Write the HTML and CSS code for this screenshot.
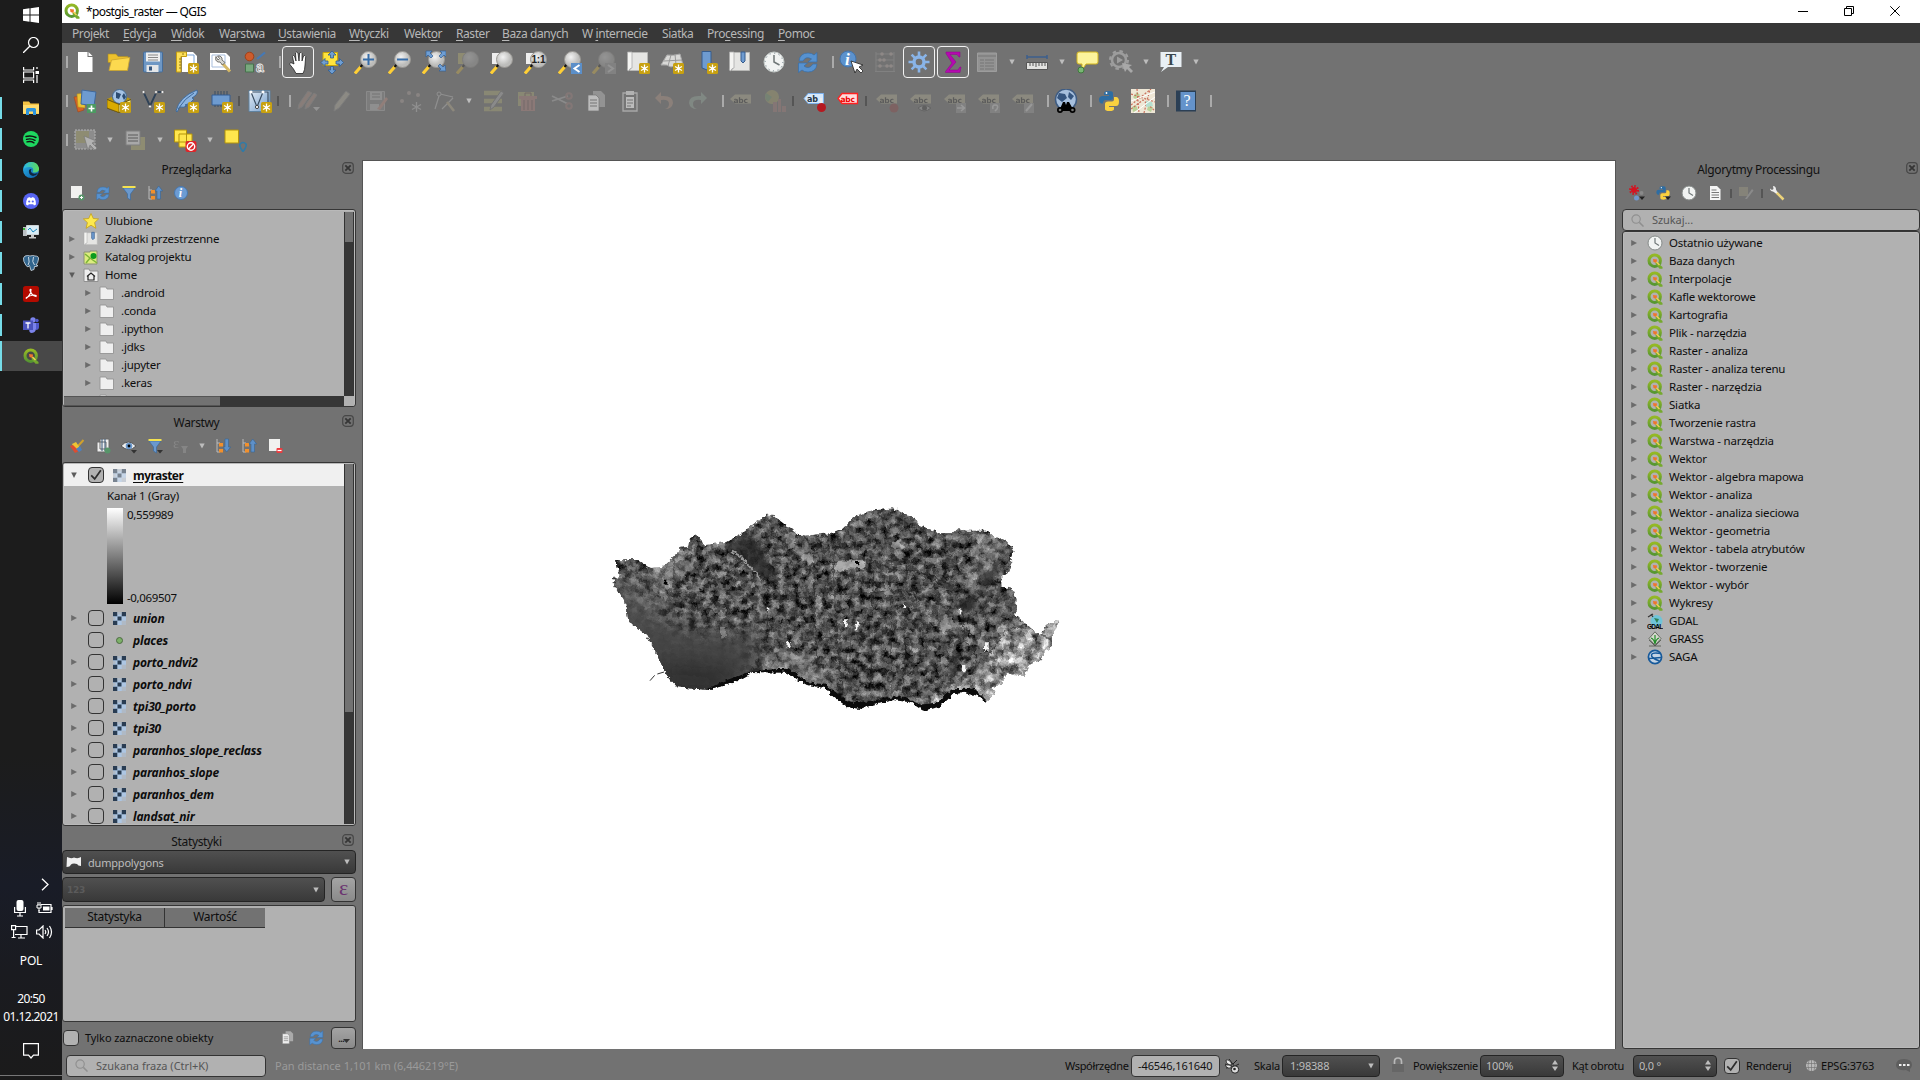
FILE: index.html
```html
<!DOCTYPE html>
<html lang="pl">
<head>
<meta charset="utf-8">
<title>*postgis_raster — QGIS</title>
<link rel="stylesheet" href="styles.css">
</head>
<body>
<svg class="defs" width="0" height="0" aria-hidden="true">
<defs>
<linearGradient id="gQ" x1="0" y1="0" x2="0" y2="1"><stop offset="0" stop-color="#95b925"/><stop offset="1" stop-color="#569632"/></linearGradient>
<linearGradient id="gE" x1="0" y1="0" x2="1" y2="1"><stop offset="0" stop-color="#2bb6e8"/><stop offset="1" stop-color="#0b5aa8"/></linearGradient>
<linearGradient id="gG" x1="0" y1="0" x2="1" y2="0"><stop offset="0" stop-color="#2bb9e6"/><stop offset="1" stop-color="#5fdc58"/></linearGradient>
<radialGradient id="gL" cx=".4" cy=".35"><stop offset="0" stop-color="#f2f2f2"/><stop offset="1" stop-color="#bcbcba"/></radialGradient>
<linearGradient id="gV" x1="0" y1="0" x2="1" y2="1"><stop offset="0" stop-color="#e6eef6"/><stop offset="1" stop-color="#6f9bcb"/></linearGradient>
</defs>
</svg>
<svg class="symbols" aria-hidden="true">
<symbol id="new" viewBox="0 0 24 24"><rect x="13" y="13" width="11" height="11" rx="1.500" fill="#c8a110"/><path d="M18.500 14.500v8M15 16.500l7 4M22 16.500l-7 4" stroke="#fff" stroke-width="1.300"/><circle cx="18.500" cy="18.500" r="1.500" fill="#fff"/></symbol>
<symbol id="file" viewBox="0 0 24 24"><path d="M5 2h9.500v5H19.500v15H5z" fill="#fff"/><path d="M15.500 2l4 4h-4z" fill="#fff"/></symbol>
<symbol id="folder" viewBox="0 0 24 24"><path d="M1 4h8l2 2.500h10v6H1z" fill="#edc12c" stroke="#a98c24" stroke-width=".6"/><path d="M4.500 10L22.800 7.500 20.500 20.500H2z" fill="#fcd94f" stroke="#cba52d" stroke-width=".8"/></symbol>
<symbol id="save" viewBox="0 0 24 24"><rect x="2.500" y="2" width="19" height="20" rx="1" fill="#6e97c4" stroke="#456c99"/><path d="M5 2.500h14v9H5z" fill="#eee"/><path d="M7 5h10M7 7.500h10M7 10h10" stroke="#888"/><path d="M5.500 15h12v7h-12z" fill="#e4e6e8"/><path d="M8 16.500h3v4H8z" fill="#35567f"/></symbol>
<symbol id="layout" viewBox="0 0 24 24"><path d="M7 2h11l4 4v16H7z" fill="#fff"/><path d="M10 5h9v12" stroke="#7aa3d6" fill="none"/><path d="M1.500 2h10v4.500H6V22H1.500z" fill="#fde058" stroke="#c49d10"/><path d="M4 9h2M4 12h2M4 15h2M4 18h2M8 3v2" stroke="#8f741b"/><use href="#new"/></symbol>
<symbol id="manager" viewBox="0 0 24 24"><path d="M1 3h16l4 4v13H1z" fill="#fff"/><path d="M3 5h13v12H3z" fill="none" stroke="#a7bddc"/><path d="M13 13l8 8.500" stroke="#d5b865" stroke-width="3"/><path d="M7 6.500q-1.500 4 2 5.500l2 0 2.500 3 2.500-2.500-3-2.500 0-2q-1.500-3-4.500-2l2 2.500-1.500 1.500z" fill="#d6d6d0" stroke="#555" stroke-width=".8"/></symbol>
<symbol id="style" viewBox="0 0 24 24"><circle cx="6.500" cy="6.500" r="4.300" fill="#cd5c2c" stroke="#a03f17"/><path d="M14 9L22 2.500" stroke="#4679b5" stroke-width="2.200"/><path d="M2.500 14h8v8h-8z" fill="#79a97e" stroke="#46724c"/><text x="13" y="22" font-family="Liberation Sans" font-size="14" font-weight="bold" fill="#727272" stroke="#eee" stroke-width=".8">a</text></symbol>
<symbol id="hand" viewBox="0 0 24 24"><path d="M8 14L6.500 6.500Q7 4.500 8.500 6L10 11 9.500 3Q10.500 1 12 3l1 8 .6-8q1.400-1.500 2.400.5L16 11l1.500-5q1.500-1.500 2.200.5L19 15q0 5-2 8.500H10Q8 19 3.500 14q.5-2 2.500-1z" fill="#fff" stroke="#111" stroke-width=".7"/></symbol>
<symbol id="panmap" viewBox="0 0 24 24"><path d="M3 2.500h14.500v13H3z" fill="#ffe43d" stroke="#c8a408"/><g fill="#6f9ed2" stroke="#305c91" stroke-width=".8"><path d="M12 1l4 4h-2.500v3h-3V5H8zM12 24l4-4h-2.500v-3.500h-3V20H8zM1 12.500l4-4v2.500h3v3H5v2.500zM23.500 12.500l-4-4v2.500H16v3h3.500v2.500z"/></g></symbol>
<symbol id="mag" viewBox="0 0 24 24"><path d="M1 23.500l6-7" stroke="#ffcf35" stroke-width="3"/><path d="M6.500 17l4-4.500" stroke="#111" stroke-width="2"/><circle cx="14.500" cy="9.500" r="8" fill="url(#gL)" stroke="#999793"/></symbol>
<symbol id="zin" viewBox="0 0 24 24"><use href="#mag"/><path d="M14.500 4v11M9 9.500h11" stroke="#376da8" stroke-width="2"/></symbol>
<symbol id="zout" viewBox="0 0 24 24"><use href="#mag"/><path d="M9 9.500h11" stroke="#376da8" stroke-width="2"/></symbol>
<symbol id="zfull" viewBox="0 0 24 24"><use href="#mag"/><path d="M4 1h6L8 3l3 3-2 2-3-3-2 2zM24 1v6l-2-2-3 3-2-2 3-3-2-2zM24 21h-7l2-2-3-3 2-2 3 3 2-2z" fill="#6e9ed4" stroke="#345f94" stroke-width=".7"/></symbol>
<symbol id="zsel" viewBox="0 0 24 24"><path d="M2 3h10v11H2z" fill="#d9d075"/><use href="#mag"/></symbol>
<symbol id="zlay" viewBox="0 0 24 24"><path d="M2 3h10v11H2z" fill="#eee"/><use href="#mag"/></symbol>
<symbol id="z11" viewBox="0 0 24 24"><use href="#zlay"/><text x="7.500" y="13" font-family="Liberation Sans" font-size="10" font-weight="bold" fill="#222">1:1</text></symbol>
<symbol id="zlast" viewBox="0 0 24 24"><use href="#mag"/><path d="M13 13h11v11H13z" fill="#5b8fc9"/><path d="M21.500 15l-5 3.500 5 3.500" fill="none" stroke="#fff" stroke-width="2"/></symbol>
<symbol id="znext" viewBox="0 0 24 24"><use href="#mag"/><path d="M13 13h11v11H13z" fill="#a9a9a9"/><path d="M16 15l5 3.500-5 3.500" fill="none" stroke="#eee" stroke-width="2"/></symbol>
<symbol id="scroll" viewBox="0 0 24 24"><path d="M3 2.500h18.500v18H4z" fill="#e5e5e3" stroke="#b7b7b5"/><path d="M1.500 2h4.500v16q-2.500 0-3 3-2.500-.5-1.500-3z" fill="#f4f4f2" stroke="#aaa" stroke-width=".8"/></symbol>
<symbol id="newmap" viewBox="0 0 24 24"><use href="#scroll"/><use href="#new"/></symbol>
<symbol id="map3d" viewBox="0 0 24 24"><path d="M7 5q6 1 13-1l3 11q-8 0-12 2-4-3-10-2z" fill="#d9d9d7" stroke="#aaa"/><path d="M4 11l18-1M11 5L8 16M15 4l1 11" stroke="#999" fill="none"/><use href="#new"/></symbol>
<symbol id="newbm" viewBox="0 0 24 24"><path d="M8 1.500h9v20L8 18z" fill="#6e9bd0" stroke="#365c8d"/><use href="#new"/></symbol>
<symbol id="bm" viewBox="0 0 24 24"><use href="#scroll"/><path d="M13 2h4v9l-2 2-2-2z" fill="#6e9bd0" stroke="#365c8d"/></symbol>
<symbol id="clock" viewBox="0 0 24 24"><circle cx="12" cy="12" r="10" fill="#f1f3f2" stroke="#c4cac8" stroke-width="1"/><circle cx="12" cy="12" r="8.800" fill="none" stroke="#6c7b85" stroke-dasharray="1 3.600"/><path d="M12 5v7l5.500 3" fill="none" stroke="#6f7777" stroke-width="1.500"/></symbol>
<symbol id="clocks" viewBox="0 0 16 16"><circle cx="8" cy="8" r="7" fill="#f1f3f2" stroke="#858a88"/><path d="M8 3v5l4 2.500" fill="none" stroke="#6f7777" stroke-width="1.200"/></symbol>
<symbol id="refresh" viewBox="0 0 24 24"><path d="M3 11Q4 3 12 3q4 0 6 2l3-2.500V12h-9l3.500-3Q10 5.500 7 11zM21 14q-1 8-9 8-4 0-6-2l-3.500 2.500V13h9l-3.500 3q5 4 9-2z" fill="#5792d0" stroke="#376fa9" stroke-width=".7"/></symbol>
<symbol id="info" viewBox="0 0 24 24"><circle cx="9" cy="9" r="8" fill="#5c92cd" stroke="#4373aa"/><text x="6" y="15" font-family="Liberation Serif" font-style="italic" font-weight="bold" font-size="17" fill="#fff">i</text><path d="M12 11l4 12 2-4 4 4 2-2-4-4 4-2z" fill="#fff" stroke="#222" stroke-width=".8"/></symbol>
<symbol id="abacus" viewBox="0 0 24 24"><path d="M3 2v20M21 2v20M3 4h18M3 10h18M3 16h18M2 21.500h20" stroke="#aaa" fill="none"/><g fill="#d9c4be"><circle cx="9" cy="4" r="1.800"/><circle cx="18" cy="4" r="1.800"/><circle cx="7" cy="10" r="1.800"/><circle cx="11" cy="10" r="1.800"/><circle cx="7" cy="16" r="1.800"/><circle cx="14" cy="16" r="1.800"/><circle cx="18" cy="16" r="1.800"/></g></symbol>
<symbol id="gear" viewBox="0 0 24 24"><path d="M12 1.500v21M1.500 12h21M4.600 4.600l14.800 14.800M19.400 4.600L4.600 19.400" stroke="#89b4e8" stroke-width="2.600"/><circle cx="12" cy="12" r="5" fill="#727272" stroke="#89b4e8" stroke-width="3.400"/></symbol>
<symbol id="sigma" viewBox="0 0 24 24"><path d="M5 2h14v5h-1l-2-2.500H9l6 7.500-7 8h9l2-3h1l-1 5.500H4.500v-1L11 13 5 3.500z" fill="#b509b0" stroke="#8d0788" stroke-width=".5"/></symbol>
<symbol id="table" viewBox="0 0 24 24"><path d="M2.500 3h19v18.500h-19z" fill="#aaa" stroke="#bbb"/><path d="M3 6h18M5 10h4M10 10h9M5 13h4M10 13h9M5 16h4M10 16h9M5 19h4M10 19h9" stroke="#777"/></symbol>
<symbol id="ruler" viewBox="0 0 24 24"><path d="M1.500 7h21M2 5v4M22 5v4" stroke="#3c5f8d" stroke-width="1.500"/><path d="M1.500 12.500h21v7h-21z" fill="#e2e2e0" stroke="#555"/><path d="M5 13v3M8 13v3M11 13v4M14 13v3M17 13v3M20 13v3" stroke="#555"/></symbol>
<symbol id="tip" viewBox="0 0 24 24"><path d="M4 2h17q2 0 2 2v8q0 2-2 2H11l-4 6v-6H4q-2 0-2-2V4q0-2 2-2z" fill="#fcf39c" stroke="#d3b51c"/><circle cx="6" cy="20" r="3" fill="#79b774" stroke="#3f7a3c"/></symbol>
<symbol id="action" viewBox="0 0 24 24"><circle cx="10" cy="10" r="7" fill="none" stroke="#bbb" stroke-width="2.500"/><circle cx="10" cy="10" r="9" fill="none" stroke="#bbb" stroke-width="2" stroke-dasharray="3.500 3.600"/><path d="M8 6.500l6 3.500-6 3.500z" fill="#bbb"/><path d="M13 13l3 9 2-3 4 4 2-2-4-4 3-2z" fill="#ccc"/></symbol>
<symbol id="text" viewBox="0 0 24 24"><path d="M1.500 2h21v15H9L2 22l3-5H1.500z" fill="#e9f0f5"/><text x="6.500" y="14.500" font-family="Liberation Serif" font-weight="bold" font-size="16" fill="#39464d">T</text></symbol>
<symbol id="addlayer" viewBox="0 0 24 24"><path d="M1 8l8-1 2 14-6 2z" fill="#d36427" stroke="#a3461a" stroke-width=".6"/><path d="M4 5l8-1v15l-7-1z" fill="#eac335" stroke="#b78e1c" stroke-width=".6"/><path d="M9 1l14 2-2 14-13-2z" fill="#6e9bd0" stroke="#41699b"/><path d="M14 15h9v9h-9z" fill="#4c9a62"/><path d="M18.500 16.500v6M15.500 19.500h6" stroke="#fff" stroke-width="1.600"/></symbol>
<symbol id="geopkg" viewBox="0 0 24 24"><path d="M0 10l12-5 12 5-12 5z" fill="#b8960f"/><circle cx="12.500" cy="7.500" r="7" fill="#a5c3e3" stroke="#41678f"/><path d="M9 3l5 2-2 5-3-1zM17 4l2 4-2 3-2-4z" fill="#2c4c70"/><path d="M0 10.500l12 5 12-5v8l-12 5L0 19z" fill="#fdf08a" stroke="#665110"/><path d="M0 10.500l12 5v8L0 19z" fill="#d9ab00" stroke="#665110" stroke-width=".7"/><use href="#new"/></symbol>
<symbol id="shp" viewBox="0 0 24 24"><path d="M2.500 3L9 17 15.500 3h6" fill="none" stroke="#2f4257" stroke-width="1.800"/><g fill="#eee" stroke="#555" stroke-width=".6"><circle cx="2.500" cy="3" r="1.500"/><circle cx="9" cy="17.500" r="1.500"/><circle cx="15" cy="3" r="1.500"/><circle cx="21.500" cy="3" r="1.500"/></g><use href="#new"/></symbol>
<symbol id="feather" viewBox="0 0 24 24"><path d="M1 22Q4 8 22 1q2 4-5 8l2 1q-3 5-9 6l2 1q-4 2-7 1l-3 5z" fill="#8cb4e0" stroke="#3f6a9a"/><path d="M3 20Q10 9 19 4" stroke="#3f6a9a" fill="none"/><use href="#new"/></symbol>
<symbol id="mem" viewBox="0 0 24 24"><path d="M6 2v16M9 2v16M12 2v16M15 2v16M18 2v16" stroke="#384d63" stroke-width="1"/><path d="M3 6h18v10H3z" fill="#6e9bd0" stroke="#345d90"/><use href="#new"/></symbol>
<symbol id="virt" viewBox="0 0 24 24"><path d="M1 1.500h21v21H1z" fill="url(#gV)" stroke="#60829f"/><path d="M3 3l6 15 6-15M3 3h17v11" fill="none" stroke="#3a4e62" stroke-width="1.200"/><circle cx="3" cy="3" r="1.500" fill="#fff"/><circle cx="9" cy="18" r="1.600" fill="#fff" stroke="#444"/><circle cx="15" cy="3" r="1.500" fill="#fff"/><use href="#new"/></symbol>
<symbol id="pen" viewBox="0 0 24 24"><path d="M4 22l1-6L16 2l4 3L9 19z" fill="#d2cdb5" stroke="#999"/></symbol>
<symbol id="pens" viewBox="0 0 24 24"><path d="M2 20l1-5L12 2l4 2L6 18z" fill="#c59c8c" stroke="#999"/><path d="M9 20l1-5 8-11 3 2-8 12z" fill="#c59c8c" stroke="#999"/><path d="M17 18h7l-3.500 4z" fill="#eee"/></symbol>
<symbol id="savee" viewBox="0 0 24 24"><path d="M2.500 2.500h18v19h-18z" fill="#999" stroke="#ccc"/><path d="M6 3h12v8H6zM6 15h9v6H6z" fill="#ddd"/><path d="M8 5h8M8 8h8" stroke="#777"/><path d="M13 20L22 8l2 2-8 11z" fill="#e4a08f"/></symbol>
<symbol id="pts" viewBox="0 0 24 24"><g fill="#c8b4b0"><circle cx="4" cy="12" r="2"/><circle cx="11" cy="4" r="2"/><circle cx="20" cy="6" r="2"/></g><path d="M18.500 13v10M14 15.500l9 5M23 15.500l-9 5" stroke="#ddd" stroke-width="1.300"/></symbol>
<symbol id="vert" viewBox="0 0 24 24"><path d="M3 20L7 7M8 5l13 3M10 20L21 9" stroke="#ddd" fill="none" stroke-width="1.200"/><circle cx="7" cy="5" r="2" fill="#727272" stroke="#ddd"/><path d="M15 13l7 9" stroke="#d6c69a" stroke-width="2.500"/></symbol>
<symbol id="multi" viewBox="0 0 24 24"><path d="M2 4h18M2 12h18M2 20h18" stroke="#c8c37b" stroke-width="4.500"/><path d="M8 21l1-5L19 2l3 2L12 18z" fill="#ccc" stroke="#777"/></symbol>
<symbol id="trash" viewBox="0 0 24 24"><path d="M2 3h16v14H2z" fill="#c8c37b"/><path d="M3 7h18v3H3zM5 10h14v12H5z" fill="#cf8d87"/><path d="M8 11v10M12 11v10M16 11v10M9 7V4h6v3" fill="none" stroke="#7a5350"/></symbol>
<symbol id="cut" viewBox="0 0 24 24"><path d="M2 7l16 8M2 12l16-5" stroke="#ccc" stroke-width="1.700"/><g fill="none" stroke="#b28783" stroke-width="2"><circle cx="19" cy="7" r="2.800"/><circle cx="19" cy="17" r="2.800"/></g></symbol>
<symbol id="copy" viewBox="0 0 24 24"><path d="M9 2h8l4 4v12H9z" fill="#aaa"/><path d="M4 6h8l3 3v13H4z" fill="#eee" stroke="#777" stroke-width=".7"/><path d="M6 11h7M6 14h7M6 17h7" stroke="#777"/></symbol>
<symbol id="paste" viewBox="0 0 24 24"><path d="M5 4h14v18H5z" fill="#777" stroke="#ccc" stroke-width="1.300"/><path d="M8 8h8v11H8z" fill="#eee"/><path d="M8 2h8v4H8z" fill="#ddd"/><path d="M9 11h6M9 14h6M9 17h4" stroke="#777"/></symbol>
<symbol id="undo" viewBox="0 0 24 24"><path d="M9 3L3 9l6 6v-4q8-1 8 4 0 4-4 5 7 0 8-6 0-8-12-7z" fill="#d0a791"/></symbol>
<symbol id="redo" viewBox="0 0 24 24"><path d="M15 3l6 6-6 6v-4q-8-1-8 4 0 4 4 5-7 0-8-6 0-8 12-7z" fill="#a8c3b1"/></symbol>
<symbol id="abc" viewBox="0 0 24 24"><path d="M1 10l5-4.500h16v9H6z" fill="#cfc9a3"/><text x="4.500" y="13.500" font-family="DejaVu Sans" font-size="7.500" font-weight="bold" fill="#222">abc</text></symbol>
<symbol id="diag" viewBox="0 0 24 24"><circle cx="9" cy="8" r="7" fill="#b9b26a"/><path d="M9 8L3 4a7 7 0 0 0 2 9zM9 8l7 2" fill="#7fae79"/><path d="M10 13h4v10h-4zM15 10h3v13h-3zM19 17h4v6h-4z" fill="#b5837d"/></symbol>
<symbol id="abpin" viewBox="0 0 24 24"><path d="M2 9.500L6 4.500h15.500v10H6z" fill="#d7e9fb" stroke="#7db1ec"/><text x="5" y="13" font-family="DejaVu Sans" font-size="8" font-weight="bold" fill="#263645">ab</text><path d="M19 9v8" stroke="#eee" stroke-width="2"/><circle cx="19.500" cy="18.500" r="4.500" fill="#b51920"/></symbol>
<symbol id="abcr" viewBox="0 0 24 24"><path d="M2 9.500L6 4.500h15.500v10H6z" fill="#fdd" stroke="#f22" stroke-width="1.300"/><text x="4.500" y="13" font-family="DejaVu Sans" font-size="7.500" font-weight="bold" fill="#e00">abc</text></symbol>
<symbol id="l1" viewBox="0 0 24 24"><use href="#abc"/><circle cx="19" cy="19" r="4.500" fill="#9b3a3a"/></symbol>
<symbol id="l2" viewBox="0 0 24 24"><use href="#abc"/><path d="M9 19q6-5 13 0-7 6-13 0z" fill="#bbb" stroke="#444"/><circle cx="15.500" cy="19" r="2.500" fill="#333"/></symbol>
<symbol id="l3" viewBox="0 0 24 24"><use href="#abc"/><path d="M13 14h10v10H13z" fill="#aaa"/><path d="M14 19h7M18 16l3.500 3-3.500 3" stroke="#fff" stroke-width="1.600" fill="none"/></symbol>
<symbol id="l4" viewBox="0 0 24 24"><use href="#abc"/><path d="M13 14h10v10H13z" fill="#aaa"/><path d="M16 20q-1-4 2-4 4 0 2 4l-2 2" stroke="#fff" stroke-width="1.600" fill="none"/></symbol>
<symbol id="l5" viewBox="0 0 24 24"><use href="#abc"/><path d="M13 14h10v10H13z" fill="#aaa"/><path d="M15 22l6-7" stroke="#fff" stroke-width="2"/></symbol>
<symbol id="osm" viewBox="0 0 24 24"><circle cx="12" cy="10.500" r="10.500" fill="#a6bfdd" stroke="#3f5c82" stroke-width="1.500"/><path d="M5 4l6 1 2 4-5 4-5-4zM15 3l5 4-3 4-3-3z" fill="#35557f"/><path d="M5 22L9 13h2l1 3 1-3h2l5 9z" fill="#000"/><circle cx="6" cy="21" r="3"/><circle cx="18.500" cy="21" r="3"/><circle cx="6" cy="21" r="1.300" fill="#777"/><circle cx="18.500" cy="21" r="1.300" fill="#777"/></symbol>
<symbol id="py" viewBox="0 0 24 24"><path d="M7 6V4q0-2 5-2 4 0 4 2v5q0 2-2.500 2H9q-3 0-3 3.500H4q-2-1-2-4T5 7h7V6z" fill="#2d6da3"/><path d="M17 8h2q3 0 3 4.500T19 17h-7v1h5v2q0 2-4.500 2T8 20v-5q0-2.500 3-2.500h4q2 0 2-2z" fill="#fbd13f"/><circle cx="9.500" cy="4" r=".9" fill="#fff"/></symbol>
<symbol id="osmmap" viewBox="0 0 24 24"><path d="M0 0h24v24H0z" fill="#eee7d6"/><path d="M2 8l4-5 3 3-4 5zM1 18l4-2 2 5-5 2zM17 17l5 1-2 5-4-2z" fill="#bad29a"/><path d="M0 5l24 8M6 0l2 24M0 16L20 0M13 24l6-24M0 20l12-9 12 11" fill="none" stroke="#c96f5a" stroke-width="1.200" stroke-dasharray="2 1.500"/><path d="M15 12l6 1 1 4-7 1z" fill="#b5dfd0"/><path d="M0 12l24-9M3 24L24 8" stroke="#fff" stroke-width="1"/></symbol>
<symbol id="help" viewBox="0 0 24 24"><path d="M2 1.500h20v21H2z" fill="#2b3f55"/><path d="M6.500 3H21v18H6.500z" fill="#6493cb"/><text x="9.500" y="17" font-family="Liberation Serif" font-size="16" fill="#fff">?</text></symbol>
<symbol id="selr" viewBox="0 0 24 24"><path d="M2 2h20v19H2z" fill="#bbb" fill-opacity=".6" stroke="#ddd" stroke-dasharray="2 1"/><path d="M3 3h13v12H3z" fill="#a19e72"/><path d="M11 8l4 14 2-5 5 5 2-2-5-5 4-2z" fill="#ddd" stroke="#777" stroke-width=".6"/></symbol>
<symbol id="selv" viewBox="0 0 24 24"><path d="M8 9h14v13H8z" fill="#a19e72"/><path d="M3 3h14v14H3z" fill="#ccc" stroke="#888"/><path d="M5 7h10M5 10h10M5 13h10" stroke="#777" stroke-width="1.500"/></symbol>
<symbol id="desel" viewBox="0 0 24 24"><path d="M1.500 2h12v12h-12zM6 6h13v13H6z" fill="#ffe64d" stroke="#b3930b"/><rect x="12.500" y="13" width="11" height="11" rx="2" fill="#df2529"/><circle cx="18" cy="18.500" r="3.700" fill="none" stroke="#fff" stroke-width="1.400"/><path d="M15.500 21l5-5" stroke="#fff" stroke-width="1.400"/></symbol>
<symbol id="selloc" viewBox="0 0 24 24"><path d="M2 2h13.500v13H2z" fill="#ffe64d" stroke="#b3930b"/><path d="M20 23.500q-4-5-3-7.500 3-3 6 0 1 2.500-3 7.500z" fill="none" stroke="#2f7ba8" stroke-width="1.600"/></symbol>
<symbol id="q" viewBox="0 0 16 16"><circle cx="7.700" cy="7.700" r="5.700" fill="none" stroke="url(#gQ)" stroke-width="3"/><path d="M9 8.500l6.500 5.500v1.700h-3L8.500 11z" fill="#75a92d"/><path d="M6 6l4 .5-.5 3.500-3-1z" fill="#f0762c"/><path d="M9.500 9l3 3" stroke="#f3cf56" stroke-width="1.500"/></symbol>
<symbol id="close" viewBox="0 0 12 12"><rect x=".7" y=".7" width="10.600" height="10.600" rx="3" fill="none" stroke="#474747" stroke-width="1.200"/><path d="M3.300 3.300l5.400 5.400M8.700 3.300L3.300 8.700" stroke="#353535" stroke-width="1.800"/></symbol>
<symbol id="tri" viewBox="0 0 6 8"><path d="M.2 1L6 4 .2 7z" fill="#6b6b6b"/></symbol>
<symbol id="trid" viewBox="0 0 6 8"><path d="M.2 1.500h5.600L3 7z" fill="#5b5b5b"/></symbol>
<symbol id="dd" viewBox="0 0 6 6"><path d="M.3.500h5.400L3 5.500z" fill="#bdbdbd"/></symbol>
<symbol id="addl" viewBox="0 0 16 16"><path d="M2 1h11v12H2z" fill="#f1f1ef"/><circle cx="12.500" cy="12.500" r="3" fill="#57956a"/><path d="M12.500 11v3M11 12.500h3" stroke="#fff"/></symbol>
<symbol id="filter" viewBox="0 0 16 16"><path d="M2 3h12l-4.500 6v6l-3-2V9z" fill="#6b99cd" stroke="#3e6c9e" stroke-width=".7"/><path d="M1.500 1h13v2h-13z" fill="#f4e250"/></symbol>
<symbol id="coll" viewBox="0 0 16 16"><path d="M2 1v13h3M2 5h3" stroke="#bbb" fill="none"/><path d="M4 5h4v3.500H4zM4 11h4v3.500H4z" fill="#f2902c"/><path d="M10 14V6H8L11.700 1l4 5H13.500v8z" fill="#5e90c8" stroke="#386493" stroke-width=".6"/></symbol>
<symbol id="expd" viewBox="0 0 16 16"><path d="M2 1v13h3M2 5h3" stroke="#bbb" fill="none"/><path d="M4 5h4v3.500H4zM4 11h4v3.500H4z" fill="#f2902c"/><path d="M10 1v8H8l3.700 5 4-5H13.500V1z" fill="#5e90c8" stroke="#386493" stroke-width=".6"/></symbol>
<symbol id="inf" viewBox="0 0 16 16"><circle cx="8" cy="8" r="6.500" fill="#6c9cd4" stroke="#4877ad"/><text x="5.700" y="12.300" font-family="Liberation Serif" font-style="italic" font-weight="bold" font-size="12" fill="#fff">i</text></symbol>
<symbol id="star" viewBox="0 0 16 16"><path d="M8 .5l2.300 5 5.300.4-4 3.700 1.300 5.700L8 12.200l-4.900 3.100 1.300-5.700-4-3.700 5.300-.4z" fill="#fde94e" stroke="#c7a215" stroke-width=".8"/></symbol>
<symbol id="proj" viewBox="0 0 16 16"><path d="M1 3h6v-1h7v13H1z" fill="#dcec7f" stroke="#8a8f79"/><path d="M2 5l5 4-4 5M7 9l7 5" stroke="#7eb637" fill="none" stroke-width="1.500"/><circle cx="10.500" cy="7" r="3" fill="#0b9b1c"/></symbol>
<symbol id="home" viewBox="0 0 16 16"><path d="M1 2h5l1 2h8v10.500H1z" fill="#eee" stroke="#909090"/><path d="M4 9.500L8 6l4 3.500M5 9v4h6V9" fill="none" stroke="#222" stroke-width="1.200"/></symbol>
<symbol id="dir" viewBox="0 0 16 16"><path d="M1 2h6l1 2h6.500v10.500H1z" fill="#efefef" stroke="#949494" stroke-width=".9"/></symbol>
<symbol id="ras" viewBox="0 0 13 13"><path d="M0 0h13v13H0z" fill="#adc6e3"/><path d="M0 0h4.300v4.300H0zM8.700 0H13v4.300H8.700zM4.500 4.500h4v4h-4zM0 8.700h4.300V13H0z" fill="#293c52"/><path d="M4.300 0h4.400v2.500H4.300zM0 5h2.500v3H0zM8.700 8.700H13V13H8.700z" fill="#b1b1b1" fill-opacity=".6"/></symbol>
<symbol id="brush" viewBox="0 0 16 16"><path d="M9 8l5.500-6" stroke="#d0a12c" stroke-width="2"/><path d="M3 6l4-2 4 6-4 4z" fill="#edc434"/><path d="M1 8l3-1 6 6-4 2z" fill="#dc4d31"/><path d="M7 11l4-3 2 4-3 2z" fill="#4e80bd"/></symbol>
<symbol id="grp" viewBox="0 0 16 16"><path d="M5 1h9v10H5zM2 4h9v10H2z" fill="#eee" stroke="#6a6a6a"/><path d="M7 1v12M10 1v12" stroke="#375779"/><circle cx="12.500" cy="12.500" r="3" fill="#57956a"/></symbol>
<symbol id="eye" viewBox="0 0 16 16"><path d="M0 8q7-8 15 0-7 7-15 0z" fill="#eee" stroke="#555"/><circle cx="8" cy="8" r="3.300" fill="#6b99cd"/><circle cx="8" cy="8" r="1.400"/><path d="M10 12h6l-3 3.500z" fill="#333"/></symbol>
<symbol id="filtd" viewBox="0 0 16 16"><use href="#filter"/><path d="M10 12h6l-3 3.500z" fill="#333"/></symbol>
<symbol id="epf" viewBox="0 0 16 16"><text x="0" y="10" font-family="Liberation Serif" font-size="15" fill="#bbb">ε</text><path d="M8 8h7l-2 3v4h-3v-4z" fill="#bbb"/></symbol>
<symbol id="rem" viewBox="0 0 16 16"><path d="M2 1h11v12H2z" fill="#f1f1ef"/><rect x="9.500" y="10" width="6" height="5" rx="1" fill="#ee3a3e"/><path d="M10.500 12.500h4" stroke="#fff" stroke-width="1.200"/></symbol>
<symbol id="model" viewBox="0 0 16 16"><circle cx="5" cy="5" r="3" fill="#d31320"/><circle cx="5" cy="5" r="4" fill="none" stroke="#d31320" stroke-width="2" stroke-dasharray="1.600 1.500"/><circle cx="7.500" cy="13" r="2.500" fill="#6f97cc"/><circle cx="12.500" cy="8" r="2" fill="#8a8a8a"/><path d="M10 11.500h6l-3 3.500z" fill="#222"/></symbol>
<symbol id="pyd" viewBox="0 0 16 16"><use href="#py"/><path d="M10 11.500h6l-3 3.500z" fill="#222"/></symbol>
<symbol id="doc" viewBox="0 0 16 16"><path d="M3 1h7l3.500 3.500V15H3z" fill="#f5f5f5"/><path d="M4.500 5h5M4.500 7.500h7.500M4.500 10h7.500M4.500 12.500h7.500" stroke="#777"/></symbol>
<symbol id="edit" viewBox="0 0 16 16"><path d="M1 2h9v9H1z" fill="#b8b28c"/><path d="M7 14l7-10 1.500 1.500L9 14z" fill="#ccc"/></symbol>
<symbol id="wrench" viewBox="0 0 16 16"><path d="M7.500 7.500l7 7" stroke="#ecd37a" stroke-width="2.500"/><path d="M4 1q3 0 3 3.500l1.500 3-1.500 1-3-2Q1 6 1 3.500l2 1.500 1.500-1z" fill="#eee"/></symbol>
<symbol id="mg" viewBox="0 0 14 14"><circle cx="5.500" cy="5.500" r="4.500" fill="none" stroke="#8f8f8f" stroke-width="1.200"/><path d="M9 9l4.500 4.500" stroke="#8f8f8f" stroke-width="1.600"/></symbol>
<symbol id="gdal" viewBox="0 0 16 16"><circle cx="9.500" cy="8" r="6" fill="#6fc4d8"/><path d="M7 5l5 1-2 4z" fill="#308356"/><path d="M1 4l5-3M4 1l2 3" stroke="#333" stroke-width="1.200"/><text x="0" y="15.500" font-family="Liberation Sans" font-size="6.500" font-weight="bold" textLength="16">GDAL</text></symbol>
<symbol id="grass" viewBox="0 0 16 16"><path d="M8 .8l6 6.700-6 6.700-6-6.700z" fill="#d4d9cc" stroke="#4e534a" stroke-width=".8"/><path d="M2 9l6 6 6-6M2 15h12" fill="none" stroke="#4e534a" stroke-width=".8"/><path d="M8 13Q7 8 4 7M8 13q1-5 4-6M8 13V4" fill="none" stroke="#228b28" stroke-width="1.200"/></symbol>
<symbol id="saga" viewBox="0 0 16 16"><circle cx="8" cy="8" r="6.600" fill="#c4d4e4" stroke="#175a9b" stroke-width="1.700"/><path d="M14 4.500Q5 3 4.500 6t8 6M2 9.500l12-1" fill="none" stroke="#175a9b" stroke-width="1.500"/></symbol>
</svg>

<aside class="taskbar">
<div class="tasks">
<div class="task sys"><svg viewBox="0 0 16 16"><path d="M0 2.200l6.500-.9v6.200H0zM7.500 1.200L16 0v7.500H7.500zM0 8.500h6.500v6.200L0 13.800zM7.500 8.500H16V16l-8.500-1.200z" fill="#fff"/></svg></div>
<div class="task sys"><svg viewBox="0 0 16 16"><circle cx="10.500" cy="5.500" r="5" fill="none" stroke="#fff" stroke-width="1.200"/><path d="M7 9l-7 7" stroke="#fff" stroke-width="1.300"/></svg></div>
<div class="task sys last"><svg viewBox="0 0 16 16"><path d="M.6 0v3h10V0M.6 16v-3h10v3M.6 5h10v6H.6zM14 0v2M14 8v8" fill="none" stroke="#fff" stroke-width="1.200"/><path d="M12.500 4H16v3h-3.500z" fill="#fff"/></svg></div>
<div class="task run"><svg viewBox="0 0 16 16"><path d="M0 1.500h6l1.500 2H16V14H0z" fill="#f5c243"/><path d="M0 5h16v8.500H0z" fill="#ffdc70"/><path d="M3 15V9.500Q3 8 4.500 8h7Q13 8 13 9.500V15h-3v-3.500H6V15z" fill="#2f95dd"/></svg></div>
<div class="task run"><svg viewBox="0 0 16 16"><circle cx="8" cy="8" r="8" fill="#1ed760"/><path d="M3 5.500q5-1.500 10 1M3.500 8.300q4.500-1.300 8.500 1M4 10.900q4-1 7 .9" fill="none" stroke="#111" stroke-width="1.400" stroke-linecap="round"/></svg></div>
<div class="task run"><svg viewBox="0 0 16 16"><circle cx="8" cy="8" r="8" fill="url(#gE)"/><path d="M.5 7Q2 0 8.500 0q6 0 7.500 6 .5 4-4 4.500-3 0-2-1.500Q11 5 6.500 5 2 5 .5 7z" fill="url(#gG)"/><path d="M6 8q-1 5 4 6 3 0 5-3-5 2-7-1-.5-1.500.5-3Q7 7 6 8z" fill="#10273f"/></svg></div>
<div class="task run"><svg viewBox="0 0 16 16"><circle cx="8" cy="8" r="8" fill="#5865f2"/><path d="M3 11.500q0-4 1.500-6.500L6.500 4l.5.800h2L9.500 4l2 1Q13 7.500 13 11.500L11 12.500l-.8-1.200H5.800L5 12.500z" fill="#fff"/><circle cx="6.200" cy="8.500" r="1.100" fill="#5865f2"/><circle cx="9.800" cy="8.500" r="1.100" fill="#5865f2"/></svg></div>
<div class="task run"><svg viewBox="0 0 16 16"><path d="M0 3h4v9H0z" fill="#b9bec2"/><path d="M0 4h2v2H0z" fill="#33b532"/><path d="M3.500 1.500h12v9h-12z" fill="#d9edf6" stroke="#cdd2d5"/><path d="M5 6l2-2 3 4 4-3" stroke="#1b87be" fill="none"/><path d="M8 11h3v2h2v1.500H6V13h2z" fill="#c7c7c7"/></svg></div>
<div class="task run"><svg viewBox="0 0 16 16"><path d="M2 1q3-1 5 0 3-1 5 0 4 0 3.500 3-.5 4-2.500 6l2 .5q-1 1.500-3.500 1l-.5 3-3 1-1.500-5-1.500 1.500-2-1.500Q0 6 .5 3z" fill="#31648c" stroke="#d5e0e8" stroke-width=".8"/><path d="M5.500 2Q7 8 5 10M10.500 2q-2 5 1 8" fill="none" stroke="#cbd9e4"/></svg></div>
<div class="task run"><svg viewBox="0 0 16 16"><rect width="16" height="16" rx="2.500" fill="#b30b00"/><path d="M3 12.500Q8 9 8 3.500 7 3 7 4.500q1.500 5 6 6 1-1.500-2-1.500-4.500.5-7.500 2.500z" fill="none" stroke="#fff" stroke-width="1.200"/></svg></div>
<div class="task run"><svg viewBox="0 0 16 16"><circle cx="10" cy="3" r="2.700" fill="#7b83eb"/><circle cx="14" cy="3.500" r="1.700" fill="#5059c9"/><path d="M6 6h7v6q-.5 4-5 4-2-1-2-4z" fill="#7b83eb"/><path d="M13 6h3v4q0 3-3 3z" fill="#5059c9"/><path d="M0 3.500h10v9.500H0z" fill="#4b53bc"/><path d="M2.500 6h5M5 6v5.500" stroke="#fff" stroke-width="1.300"/></svg></div>
<div class="task run on"><svg><use href="#q"/></svg></div>
</div>
<div class="tray">
<div class="chev"><svg width="8" height="13" viewBox="0 0 8 13"><path d="M1 .8l6 5.700-6 5.700" fill="none" stroke="#fff" stroke-width="1.300"/></svg></div>
<div class="pair"><svg width="12" height="17" viewBox="0 0 12 17"><rect x="2.500" y="0" width="7" height="11" rx="2" fill="#fff"/><path d="M.6 7v5.500h10.800V7M6 12.500v3M3 16h6" fill="none" stroke="#fff" stroke-width="1.200"/></svg><svg width="17" height="12" viewBox="0 0 17 12"><path d="M5 2.500h10v8H3V8M16 5v3" fill="none" stroke="#fff" stroke-width="1.200"/><path d="M7 4.500h6.500v4H7z" fill="#fff"/><path d="M2 0v3M4 0v3M1 3h4v3H1zM3 6v3" fill="none" stroke="#fff"/></svg></div>
<div class="pair"><svg width="17" height="14" viewBox="0 0 17 14"><path d="M5 1.500h11v8H4M10 10v3M7 13h7M.6.600h4v4h-4zM2.600 5v8M.6 12.500h4" fill="none" stroke="#fff" stroke-width="1.200"/></svg><svg width="17" height="14" viewBox="0 0 17 14"><path d="M.6 5H3l4-4v12L3 9H.6zM9 5q1.500 2 0 4M11 3q3 4 0 8M13.500 1q4 6 0 12" fill="none" stroke="#fff" stroke-width="1.200"/></svg></div>
<div class="lang">POL</div>
<div class="time"><div>20:50</div><div>01.12.2021</div></div>
<div class="note"><svg width="16" height="16" viewBox="0 0 16 16"><path d="M.6.600h14.800v11.500H10.500L8 15l-2.500-2.900H.6z" fill="none" stroke="#fff" stroke-width="1.200"/></svg></div>
<div class="peek"></div>
</div>
</aside>

<div class="app">
<header class="titlebar"><svg width="16" height="16"><use href="#q"/></svg><span class="cap">*postgis_raster — QGIS</span>
<div class="winbtns"><svg viewBox="0 0 10 10"><path d="M0 5.500h10" stroke="#000"/></svg><svg viewBox="0 0 10 10"><path d="M.5 2.500h7v7h-7zM2.500 2.500v-2h7v7h-2" fill="none" stroke="#000"/></svg><svg viewBox="0 0 10 10"><path d="M.3.300l9.400 9.400M9.700.300L.3 9.700" stroke="#000"/></svg></div></header>
<nav class="menu"><span>Pro<u>j</u>ekt</span><span><u>E</u>dycja</span><span><u>W</u>idok</span><span>W<u>a</u>rstwa</span><span><u>U</u>stawienia</span><span><u>W</u>tyczki</span><span>Wekt<u>o</u>r</span><span><u>R</u>aster</span><span><u>B</u>aza danych</span><span>W <u>i</u>nternecie</span><span>Siatka</span><span>Pro<u>c</u>essing</span><span><u>P</u>omoc</span></nav>

<div class="toolbars">
<div class="tb"><b class="h first"></b>
<a><svg><use href="#file"/></svg></a><a><svg><use href="#folder"/></svg></a><a><svg><use href="#save"/></svg></a><a><svg><use href="#layout"/></svg></a><a><svg><use href="#manager"/></svg></a><a><svg><use href="#style"/></svg></a><b class="h"></b>
<a class="on"><svg><use href="#hand"/></svg></a><a><svg><use href="#panmap"/></svg></a><a><svg><use href="#zin"/></svg></a><a><svg><use href="#zout"/></svg></a><a><svg><use href="#zfull"/></svg></a><a class="dim"><svg><use href="#zsel"/></svg></a><a><svg><use href="#zlay"/></svg></a><a><svg><use href="#z11"/></svg></a><a><svg><use href="#zlast"/></svg></a><a class="dim"><svg><use href="#znext"/></svg></a><a><svg><use href="#newmap"/></svg></a><a><svg><use href="#map3d"/></svg></a><a><svg><use href="#newbm"/></svg></a><a><svg><use href="#bm"/></svg></a><a><svg><use href="#clock"/></svg></a><a><svg><use href="#refresh"/></svg></a><b class="h"></b>
<a><svg><use href="#info"/></svg></a><a class="dim"><svg><use href="#abacus"/></svg></a><a class="on"><svg><use href="#gear"/></svg></a><a class="on"><svg><use href="#sigma"/></svg></a><a class="half"><svg><use href="#table"/></svg></a><i><svg><use href="#dd"/></svg></i><a><svg><use href="#ruler"/></svg></a><i><svg><use href="#dd"/></svg></i><a><svg><use href="#tip"/></svg></a><a class="half"><svg><use href="#action"/></svg></a><i><svg><use href="#dd"/></svg></i><a><svg><use href="#text"/></svg></a><i><svg><use href="#dd"/></svg></i></div>
<div class="tb"><b class="h first"></b>
<a><svg><use href="#addlayer"/></svg></a><a><svg><use href="#geopkg"/></svg></a><a><svg><use href="#shp"/></svg></a><a><svg><use href="#feather"/></svg></a><a><svg><use href="#mem"/></svg></a><b class="s"></b><a><svg><use href="#virt"/></svg></a><b class="s"></b><b class="h"></b>
<a class="dim"><svg><use href="#pens"/></svg></a><a class="dim"><svg><use href="#pen"/></svg></a><a class="dim"><svg><use href="#savee"/></svg></a><a class="dim"><svg><use href="#pts"/></svg></a><a class="dim"><svg><use href="#vert"/></svg></a><i><svg><use href="#dd"/></svg></i><a class="dim"><svg><use href="#multi"/></svg></a><a class="dim"><svg><use href="#trash"/></svg></a><a class="dim"><svg><use href="#cut"/></svg></a><a class="half"><svg><use href="#copy"/></svg></a><a class="half"><svg><use href="#paste"/></svg></a><a class="dim"><svg><use href="#undo"/></svg></a><a class="dim"><svg><use href="#redo"/></svg></a><b class="h"></b>
<a class="dim"><svg><use href="#abc"/></svg></a><a class="dim"><svg><use href="#diag"/></svg></a><b class="s"></b><a><svg><use href="#abpin"/></svg></a><a><svg><use href="#abcr"/></svg></a><b class="s"></b><a class="dim"><svg><use href="#l1"/></svg></a><a class="dim"><svg><use href="#l2"/></svg></a><a class="dim"><svg><use href="#l3"/></svg></a><a class="dim"><svg><use href="#l4"/></svg></a><a class="dim"><svg><use href="#l5"/></svg></a><b class="h"></b>
<a><svg><use href="#osm"/></svg></a><b class="h"></b><a><svg><use href="#py"/></svg></a><a><svg><use href="#osmmap"/></svg></a><b class="h"></b><a><svg><use href="#help"/></svg></a><b class="h"></b></div>
<div class="tb"><b class="h first"></b><a class="half"><svg><use href="#selr"/></svg></a><i><svg><use href="#dd"/></svg></i><a class="half"><svg><use href="#selv"/></svg></a><i><svg><use href="#dd"/></svg></i><a><svg><use href="#desel"/></svg></a><i><svg><use href="#dd"/></svg></i><a><svg><use href="#selloc"/></svg></a></div>
</div>

<main class="work">
<section class="dock left">
<div class="dt"><span>Przeglądarka</span><svg><use href="#close"/></svg></div>
<div class="dtb"><svg><use href="#addl"/></svg><svg><use href="#refresh"/></svg><svg><use href="#filter"/></svg><svg><use href="#coll"/></svg><svg><use href="#inf"/></svg></div>
<div class="box browser">
<div class="tree">
<div class="r"><svg class="t"></svg><svg class="k"><use href="#star"/></svg>Ulubione</div>
<div class="r"><svg class="t"><use href="#tri"/></svg><svg class="k"><use href="#bm"/></svg>Zakładki przestrzenne</div>
<div class="r"><svg class="t"><use href="#tri"/></svg><svg class="k"><use href="#proj"/></svg>Katalog projektu</div>
<div class="r"><svg class="t"><use href="#trid"/></svg><svg class="k"><use href="#home"/></svg>Home</div>
<div class="r sub"><svg class="t"><use href="#tri"/></svg><svg class="k"><use href="#dir"/></svg>.android</div>
<div class="r sub"><svg class="t"><use href="#tri"/></svg><svg class="k"><use href="#dir"/></svg>.conda</div>
<div class="r sub"><svg class="t"><use href="#tri"/></svg><svg class="k"><use href="#dir"/></svg>.ipython</div>
<div class="r sub"><svg class="t"><use href="#tri"/></svg><svg class="k"><use href="#dir"/></svg>.jdks</div>
<div class="r sub"><svg class="t"><use href="#tri"/></svg><svg class="k"><use href="#dir"/></svg>.jupyter</div>
<div class="r sub"><svg class="t"><use href="#tri"/></svg><svg class="k"><use href="#dir"/></svg>.keras</div>
<div class="r sub"><svg class="t"></svg><svg class="k"><use href="#dir"/></svg></div>
</div>
<div class="vs"><div class="th"></div></div>
<div class="hs"><div class="th"></div></div>
<div class="corner"></div>
</div>

<div class="dt gap6"><span>Warstwy</span><svg><use href="#close"/></svg></div>
<div class="dtb"><svg><use href="#brush"/></svg><svg><use href="#grp"/></svg><svg><use href="#eye"/></svg><svg><use href="#filtd"/></svg><svg class="dim"><use href="#epf"/></svg><svg class="mini"><use href="#dd"/></svg><svg><use href="#expd"/></svg><svg><use href="#coll"/></svg><svg><use href="#rem"/></svg></div>
<div class="box layers">
<div class="tree">
<div class="l sel"><svg class="t"><use href="#trid"/></svg><span class="cb"><svg viewBox="0 0 16 16"><path d="M2.500 8.500l4 4 7-10" fill="none" stroke="#2e2e2e" stroke-width="2"/></svg></span><svg class="k half"><use href="#ras"/></svg><u>myraster</u></div>
<div class="band">Kanał 1 (Gray)</div>
<div class="legend"><div class="ramp"></div><div class="lab"><span>0,559989</span><span>-0,069507</span></div></div>
<div class="l"><svg class="t"><use href="#tri"/></svg><span class="cb"></span><svg class="k"><use href="#ras"/></svg><em>union</em></div>
<div class="l"><svg class="t"></svg><span class="cb"></span><svg class="k" viewBox="0 0 13 13"><circle cx="6.500" cy="6.500" r="3" fill="#7cb168" stroke="#4d6a43"/></svg><em>places</em></div>
<div class="l"><svg class="t"><use href="#tri"/></svg><span class="cb"></span><svg class="k"><use href="#ras"/></svg><em>porto_ndvi2</em></div>
<div class="l"><svg class="t"><use href="#tri"/></svg><span class="cb"></span><svg class="k"><use href="#ras"/></svg><em>porto_ndvi</em></div>
<div class="l"><svg class="t"><use href="#tri"/></svg><span class="cb"></span><svg class="k"><use href="#ras"/></svg><em>tpi30_porto</em></div>
<div class="l"><svg class="t"><use href="#tri"/></svg><span class="cb"></span><svg class="k"><use href="#ras"/></svg><em>tpi30</em></div>
<div class="l"><svg class="t"><use href="#tri"/></svg><span class="cb"></span><svg class="k"><use href="#ras"/></svg><em>paranhos_slope_reclass</em></div>
<div class="l"><svg class="t"><use href="#tri"/></svg><span class="cb"></span><svg class="k"><use href="#ras"/></svg><em>paranhos_slope</em></div>
<div class="l"><svg class="t"><use href="#tri"/></svg><span class="cb"></span><svg class="k"><use href="#ras"/></svg><em>paranhos_dem</em></div>
<div class="l"><svg class="t"><use href="#tri"/></svg><span class="cb"></span><svg class="k"><use href="#ras"/></svg><em>landsat_nir</em></div>
</div>
<div class="vs"><div class="th tall"></div></div>
</div>

<div class="dt gap5"><span>Statystyki</span><svg><use href="#close"/></svg></div>
<div class="combo c1"><svg width="16" height="12" viewBox="0 0 16 12"><path d="M1 1q4 2 7 .5Q12 3 15 1v9q-3 0-4-2-4-1-6 .500Q4 11 .5 11z" fill="#f0f0f0"/></svg><span>dumppolygons</span><svg class="dd"><use href="#dd"/></svg></div>
<div class="crow"><div class="combo c2"><small>123</small><svg class="dd"><use href="#dd"/></svg></div><div class="btn eps">ε</div></div>
<div class="stat"><div class="sh">Statystyka</div><div class="sh">Wartość</div></div>
<div class="srow tah"><span class="cb full"></span><span class="lbl">Tylko zaznaczone obiekty</span><svg class="cp"><use href="#copy"/></svg><svg><use href="#refresh"/></svg><div class="btn more">...<svg viewBox="0 0 7 4"><path d="M0 0h7L3.500 4z" fill="#333"/></svg></div></div>
</section>

<section class="map">
<svg class="raster" width="470" height="240" viewBox="0 0 1410 720">
<defs>
<clipPath id="shape"><path d="M48 210L112 210 150 234 186 232 236 184 240 174 264 170 270 145 284 136 304 146 312 166 350 160 378 156 420 134 440 120 500 74 520 74 540 92 600 138 690 130 706 124 730 114 760 80 810 62 880 55 920 76 948 84 956 104 1020 130 1060 130 1076 114 1100 122 1160 122 1186 142 1220 154 1244 184 1232 204 1236 236 1204 262 1204 290 1236 296 1250 328 1246 374 1280 404 1320 436 1340 406 1370 390 1376 406 1356 430 1356 470 1330 490 1320 512 1284 524 1274 560 1240 554 1222 548 1206 580 1176 596 1186 608 1154 640 1140 618 1090 608 1060 612 1020 650 970 662 930 636 880 630 820 646 780 656 744 652 700 620 676 594 620 584 560 548 460 546 400 578 330 600 232 592 200 554 180 514 140 436 84 392 80 346 46 290 40 264 60 262z"/></clipPath>
<filter id="city" x="0" y="0" width="100%" height="100%" color-interpolation-filters="sRGB"><feTurbulence type="fractalNoise" baseFrequency=".045" numOctaves="4" seed="11"/><feColorMatrix values="1 0 0 0 -.2 1 0 0 0 -.2 1 0 0 0 -.2 0 0 0 0 1"/></filter>
<filter id="bright" x="0" y="0" width="100%" height="100%" color-interpolation-filters="sRGB"><feTurbulence type="fractalNoise" baseFrequency=".04" numOctaves="4" seed="5"/><feColorMatrix values="1.300 0 0 0 -.08 1.300 0 0 0 -.08 1.300 0 0 0 -.08 0 0 0 0 1"/></filter>
<filter id="patch" x="0" y="0" width="100%" height="100%" color-interpolation-filters="sRGB"><feTurbulence type="fractalNoise" baseFrequency=".025" numOctaves="4" seed="23"/><feColorMatrix values="0 0 0 0 .68 0 0 0 0 .68 0 0 0 0 .68 0 4 0 0 -2.200"/></filter>
<filter id="rough" x="0" y="0" width="100%" height="100%" color-interpolation-filters="sRGB"><feTurbulence type="fractalNoise" baseFrequency=".09" numOctaves="2" seed="3"/><feDisplacementMap in="SourceGraphic" scale="16" xChannelSelector="R" yChannelSelector="G"/></filter>
<filter id="b30" x="-40%" y="-40%" width="180%" height="180%"><feGaussianBlur stdDeviation="32"/></filter>
<filter id="b8" x="-30%" y="-30%" width="160%" height="160%"><feGaussianBlur stdDeviation="6"/></filter>
<mask id="east"><path d="M1190 410L1400 370 1380 600 1090 640 960 640 1040 590 1150 540z" fill="#fff" filter="url(#b8)"/><path d="M490 500l80-20 90 60 30 50-60 10-70-50-70 0zM1130 130l60 10 10 60-80 20zM1070 260l130-60-20 50-60 60zM160 230l90-40 10 40-50 70-60-20z" fill="#999" filter="url(#b8)"/></mask>
</defs>
<g filter="url(#rough)"><g clip-path="url(#shape)">
<rect width="1410" height="720" filter="url(#city)"/>
<rect width="1410" height="720" filter="url(#patch)" opacity=".35"/>
<g mask="url(#east)"><rect width="1410" height="720" filter="url(#bright)"/></g>
<path d="M0 240L90 310 170 370 290 420 430 420 480 440 470 530 380 680 120 680z" fill="#464646" opacity=".95" filter="url(#b30)"/>
<path d="M60 235l50 20 100 90-30 50-90-50z" fill="#8a8a8a" opacity=".4" filter="url(#b30)"/>
<path d="M180 510l160 10 90 10-80 100-180-10z" fill="#282828" opacity=".7" filter="url(#b30)"/>
<path d="M376 170l60-42 50 40 24 60 26 20-16 20-50-12-60-50z" fill="#272727" opacity=".75" filter="url(#b8)"/>
<path d="M396 185l28 15 20 26 24 22 10 16" fill="none" stroke="#999" stroke-width="6"/>
<path d="M1150 240l40-12-12 50-34 18zM1076 330l60-20-10 40-36 30zM1060 490l20 0-4 60-22 10z" fill="#252525" opacity=".75" filter="url(#b8)"/>
<g fill="none" stroke="#252525" stroke-width="3.500" opacity=".6"><path d="M480 270q100-40 210-52l120-8q60 34 130 32l80 26 50 40 20 60 0 80 40 50-8 40M706 140l-6 90 10 200 20 200M222 210v120M640 150l6 260 10 130M505 250v170M820 240l-8 390M980 130l-8 120 60 40M870 260l6 360M500 330l560-40M640 440l140 10M750 450v120M920 200l-10 420M1160 500l60-80 60-15 80 50"/></g>
<g fill="#c5c5c5"><path d="M556 130l28-4 2 40-20 12-8-20zM604 194l38-2-2 28-34-6zM868 160l30-10 16 22-30 2zM856 270l24 44-28 4z" opacity=".45"/><path d="M700 240l14-28 80-2-2 26-40-4-30 14z" opacity=".75"/><path d="M732 388l12 0-2 20-10 0zM770 394l8 0-4 24-10 4zM560 456l12 0 0 18-12 0zM910 342l8 0 0 12-8 0zM1152 460l14 0 0 22-14 0zM1086 524l10 0 0 20-10 0zM1076 358h6v12h-6zM500 352h8v10h-8z" fill="#f4f4f4"/><path d="M360 410l16 0 2 32-14 4zM1020 390l36-10 16 30-50 20zM1022 500l16-4 4 20-18 4zM1110 406l12 0v30h-12z" opacity=".45"/></g>
<path d="M768 216h10v10h-10zM194 272h8v12h-8z"/>
<path d="M330 604Q440 545 560 546L620 586 676 594 746 650 820 644 900 628 960 654 1010 648 1060 608 1120 606 1154 640" fill="none" stroke="#0b0b0b" stroke-width="20"/>
</g></g>
<path d="M150 572l14-16M172 552l20-6M36 266h14M38 278h10M40 290h8" stroke="#333" stroke-width="3" fill="none"/>
</svg>
</section>

<section class="dock right">
<div class="dt"><span>Algorytmy Processingu</span><svg><use href="#close"/></svg></div>
<div class="dtb"><svg><use href="#model"/></svg><svg><use href="#pyd"/></svg><svg><use href="#clocks"/></svg><svg><use href="#doc"/></svg><b></b><svg class="dim"><use href="#edit"/></svg><b></b><svg><use href="#wrench"/></svg></div>
<div class="field find tah"><svg><use href="#mg"/></svg>Szukaj...</div>
<div class="box algs">
<div class="r"><svg class="t"><use href="#tri"/></svg><svg class="k"><use href="#clocks"/></svg>Ostatnio używane</div>
<div class="r"><svg class="t"><use href="#tri"/></svg><svg class="k"><use href="#q"/></svg>Baza danych</div>
<div class="r"><svg class="t"><use href="#tri"/></svg><svg class="k"><use href="#q"/></svg>Interpolacje</div>
<div class="r"><svg class="t"><use href="#tri"/></svg><svg class="k"><use href="#q"/></svg>Kafle wektorowe</div>
<div class="r"><svg class="t"><use href="#tri"/></svg><svg class="k"><use href="#q"/></svg>Kartografia</div>
<div class="r"><svg class="t"><use href="#tri"/></svg><svg class="k"><use href="#q"/></svg>Plik - narzędzia</div>
<div class="r"><svg class="t"><use href="#tri"/></svg><svg class="k"><use href="#q"/></svg>Raster - analiza</div>
<div class="r"><svg class="t"><use href="#tri"/></svg><svg class="k"><use href="#q"/></svg>Raster - analiza terenu</div>
<div class="r"><svg class="t"><use href="#tri"/></svg><svg class="k"><use href="#q"/></svg>Raster - narzędzia</div>
<div class="r"><svg class="t"><use href="#tri"/></svg><svg class="k"><use href="#q"/></svg>Siatka</div>
<div class="r"><svg class="t"><use href="#tri"/></svg><svg class="k"><use href="#q"/></svg>Tworzenie rastra</div>
<div class="r"><svg class="t"><use href="#tri"/></svg><svg class="k"><use href="#q"/></svg>Warstwa - narzędzia</div>
<div class="r"><svg class="t"><use href="#tri"/></svg><svg class="k"><use href="#q"/></svg>Wektor</div>
<div class="r"><svg class="t"><use href="#tri"/></svg><svg class="k"><use href="#q"/></svg>Wektor - algebra mapowa</div>
<div class="r"><svg class="t"><use href="#tri"/></svg><svg class="k"><use href="#q"/></svg>Wektor - analiza</div>
<div class="r"><svg class="t"><use href="#tri"/></svg><svg class="k"><use href="#q"/></svg>Wektor - analiza sieciowa</div>
<div class="r"><svg class="t"><use href="#tri"/></svg><svg class="k"><use href="#q"/></svg>Wektor - geometria</div>
<div class="r"><svg class="t"><use href="#tri"/></svg><svg class="k"><use href="#q"/></svg>Wektor - tabela atrybutów</div>
<div class="r"><svg class="t"><use href="#tri"/></svg><svg class="k"><use href="#q"/></svg>Wektor - tworzenie</div>
<div class="r"><svg class="t"><use href="#tri"/></svg><svg class="k"><use href="#q"/></svg>Wektor - wybór</div>
<div class="r"><svg class="t"><use href="#tri"/></svg><svg class="k"><use href="#q"/></svg>Wykresy</div>
<div class="r"><svg class="t"><use href="#tri"/></svg><svg class="k"><use href="#gdal"/></svg>GDAL</div>
<div class="r"><svg class="t"><use href="#tri"/></svg><svg class="k"><use href="#grass"/></svg>GRASS</div>
<div class="r"><svg class="t"><use href="#tri"/></svg><svg class="k"><use href="#saga"/></svg>SAGA</div>
</div>
</section>
</main>

<footer class="status tah">
<div class="field locate"><svg><use href="#mg"/></svg>Szukana fraza (Ctrl+K)</div>
<span class="pan">Pan distance 1,101 km (6,446219°E)</span>
<span class="w-coord">Współrzędne</span>
<div class="field coord">-46546,161640</div>
<svg class="bug" viewBox="0 0 16 16"><path d="M5 1l6 8M1 6l9 3M2 10l6-1M13 2L9 6M15 6l-4 2" stroke="#222" fill="none"/><path d="M2 2q4-1 6 5Q2 7 2 2zM1 7q5-1 7 2-4 3-7-2z" fill="#eee" stroke="#222" stroke-width=".8"/><circle cx="11" cy="11.500" r="3.700" fill="#ddd" stroke="#222"/><circle cx="10.500" cy="11" r="1.300" fill="#222"/></svg>
<span class="w-skala">Skala</span>
<div class="combo scale"><span>1:98388</span><svg class="dd"><use href="#dd"/></svg></div>
<svg class="lock" viewBox="0 0 12 15"><path d="M2.500 8V4.500q0-3.500 3.500-3.500t3.500 3.500V8" fill="none" stroke="#b9b9b9" stroke-width="1.700"/><path d="M0 7h12v8H0z" fill="#666"/></svg>
<span class="w-pow">Powiększenie</span>
<div class="combo spin"><span>100%</span><svg viewBox="0 0 6 11"><path d="M3 0l3 4.500H0zM3 11l3-4.500H0z" fill="#bdbdbd"/></svg></div>
<span class="w-kat">Kąt obrotu</span>
<div class="combo spin s2"><span>0,0 °</span><svg viewBox="0 0 6 11"><path d="M3 0l3 4.500H0zM3 11l3-4.500H0z" fill="#bdbdbd"/></svg></div>
<span class="cb full"><svg viewBox="0 0 16 16"><path d="M2.500 8.500l4 4 7-10" fill="none" stroke="#2e2e2e" stroke-width="2"/></svg></span>
<span class="w-ren">Renderuj</span>
<svg class="globe" viewBox="0 0 13 13"><circle cx="6.500" cy="6.500" r="5.500" fill="#bbb"/><path d="M1 4.500h11M1 8.500h11M6.500 1v11M4 1.500q-2 5 0 10M9 1.500q2 5 0 10" fill="none" stroke="#777" stroke-width=".7"/></svg>
<span>EPSG:3763</span>
<svg class="bub" viewBox="0 0 16 15"><path d="M8 1q8 0 8 6 0 2-2 4v3l-4-2Q0 13 0 7q0-6 8-6z" fill="#5e5e5e"/><path d="M3 6h2.500v2H3zM7 6h2.500v2H7zM11 6h2.500v2H11z" fill="#eee"/></svg>
</footer>
</div>
</body>
</html>
```
FILE: styles.css
```css
* { box-sizing: border-box; }
body { margin: 0; width: 1920px; height: 1080px; overflow: hidden; display: flex; background: #727272; color: #0d0d0d; font: 11.500px/18px "Noto Sans", "Open Sans", sans-serif; letter-spacing: -.2px; white-space: nowrap; }
.defs { position: absolute; }
svg { flex: none; display: block; }
svg.symbols { display: none; }
.dim { opacity: .27; }
.half { opacity: .6; }

/* taskbar */
.taskbar { width: 62px; height: 1080px; background: linear-gradient(#1c1c1c 0 70%, #191c27 82%, #1a1b20 90%, #1b1b1b); display: flex; flex-direction: column; justify-content: space-between; color: #fff; flex: none; }
.task { height: 31px; display: flex; align-items: center; justify-content: center; position: relative; }
.task svg { width: 16px; height: 16px; }
.task.run svg { margin-bottom: 1px; }
.task.sys { height: 30px; }
.task.sys.last { height: 29px; margin-bottom: 4px; }
.task.run::before { content: ""; position: absolute; left: 0; top: 4px; width: 2px; height: 22px; background: #76dce8; }
.task.on { height: 30px; background: #484848; }
.task.on::before { top: 0; height: 30px; }
.tray { text-align: center; font-size: 12px; height: 206px; display: flex; flex-direction: column; }
.chev { height: 22px; padding: 4px 0 0 41px; }
.pair { height: 24px; display: grid; grid-template-columns: 17px 17px; gap: 8px; justify-content: center; place-items: center; padding-left: 2px; }
.lang { margin-top: 8px; height: 18px; }
.time { margin-top: 20px; line-height: 17.500px; letter-spacing: -.6px; }
.note { margin-top: 18px; display: flex; justify-content: center; }
.peek { margin-top: auto; height: 5px; border-top: 1px solid #777; }

/* window frame */
.app { width: 1858px; display: flex; flex-direction: column; }
.titlebar { height: 23px; background: #fff; color: #000; display: flex; align-items: center; padding: 0 0 2px 2px; font-size: 12px; }
.cap { margin: 2px 0 0 6px; letter-spacing: -.6px; }
.winbtns { margin: 0 20px 0 auto; display: flex; gap: 36px; }
.winbtns svg { width: 10px; height: 10px; }
.menu { height: 20px; background: #373737; color: #b8b8b8; display: grid; grid-template-columns: 51px 48px 48px 59px 71px 55px 52px 46px 80px 80px 45px 71px 50px; padding: 1px 0 0 10px; align-items: center; font-size: 12px; letter-spacing: -.42px; }
u { text-underline-offset: 2px; }
.toolbars { height: 117px; }
.tb { height: 39px; display: flex; align-items: center; padding: 0 0 2px 4px; }
.tb a { width: 34px; height: 33px; display: flex; align-items: center; justify-content: center; }
.tb a svg { width: 24px; height: 24px; }
.tb a.on svg { width: 32px; height: 32px; padding: 3px; border: 1px solid #f2f2f2; border-radius: 4px; }
.tb .h { width: 9px; height: 12px; border-right: 2px solid #aaa; }
.tb .h.first { width: 2px; }
.tb .s { width: 5px; height: 10px; border-left: 2px solid #555; }
.tb i { width: 16px; display: flex; justify-content: center; }
.tb i svg { width: 6px; height: 6px; }

/* docks */
.work { height: 889px; display: flex; }
.dock { display: flex; flex-direction: column; }
.left { width: 300px; padding-right: 6px; }
.right { width: 304px; padding-left: 6px; }
.dt { height: 20px; display: flex; align-items: center; color: #111; font-size: 12px; flex: none; }
.dt span { flex: 1; text-align: center; padding: 0 11px 0 0; letter-spacing: -.35px; }
.dt svg { width: 12px; height: 12px; margin: 0 2px 4px 0; }
.dtb { height: 29px; display: flex; gap: 10px; padding: 0 0 3px 7px; align-items: center; flex: none; }
.dtb svg { width: 16px; height: 16px; }
.dtb svg.mini { width: 6px; height: 6px; margin: 0; }
.dtb b { width: 2px; height: 9px; background: #555; margin: 0 -4px 0 -3px; }
.gap6 { margin-top: 6px; }
.gap5 { margin-top: 5px; height: 19px; padding-top: 2px; }
.box { background: #b1b1b1; border: 1px solid #363636; border-radius: 3px; box-shadow: inset 0 0 0 1px #b9b9b9; flex: none; overflow: hidden; }
.browser { height: 198px; padding: 2px 1px 1px; display: grid; grid-template: 184px 10px / 280px 10px; }
.tree { overflow: hidden; }
.r { height: 18px; display: flex; align-items: center; }
.r .t { width: 6px; height: 8px; margin: 0 8px 0 5px; }
.r .k { width: 16px; height: 16px; margin: -1px 6px 0 0; }
.r.sub { padding-left: 16px; }
.vs { background: #363636; border: 1px solid #333; border-width: 0 1px; }
.vs .th { height: 30px; background: #727272; }
.vs .th.tall { height: 248px; }
.hs { background: #363636; }
.hs .th { width: 156px; height: 10px; background: #727272; border: 1px solid #555; border-width: 1px 0; }
.corner { background: #b1b1b1; }
.layers { height: 364px; padding: 1px; display: grid; grid-template: 360px / 280px 10px; }
.l { height: 22px; display: flex; align-items: center; font-weight: 700; font-size: 12px; }
.l em { letter-spacing: -.17px; padding-top: 1px; }
.l u { letter-spacing: -.55px; padding-top: 1px; }
.l.sel { background: #f0f0f0; }
.l .t { width: 6px; height: 8px; margin: 0 11px 0 7px; }
.l .k { width: 13px; height: 13px; margin: 0 7px 0 9px; }
.cb { width: 16px; height: 16px; border: 1px solid #333; border-radius: 4px; flex: none; }
.sel .cb, .cb.full { background: #b1b1b1; }
.cb svg { width: 14px; height: 14px; }
.band { height: 22px; padding-left: 43px; line-height: 20px; }
.legend { height: 99px; display: flex; padding-left: 43px; gap: 4px; }
.ramp { width: 16px; height: 96px; background: linear-gradient(#fff, #000); }
.lab { display: flex; flex-direction: column; justify-content: space-between; height: 101px; margin-top: -2px; letter-spacing: -.35px; }
.combo { background: linear-gradient(#505050, #393939); border: 1px solid #242424; border-radius: 4px; color: #bcbcbc; display: flex; align-items: center; gap: 6px; flex: none; }
.combo .dd { width: 6px; height: 6px; margin: 0 5px 0 auto; }
.c1 { height: 24px; padding-left: 3px; font-size: 11px; }
.c1 span { padding-top: 1px; }
.crow { display: flex; gap: 6px; margin-top: 3px; height: 25px; }
.c2 { width: 263px; padding-left: 4px; }
.c2 small { color: #5b5b5b; font: bold 9px "DejaVu Sans", sans-serif; }
.btn { background: linear-gradient(#a4a4a4, #8a8a8a); border: 1px solid #333; border-radius: 4px; }
.eps { width: 25px; text-align: center; color: #6b3370; font: 22px/20px "Liberation Serif", serif; }
.stat { margin-top: 3px; height: 117px; background: #b1b1b1; border: 1px solid #363636; border-radius: 3px; display: flex; padding: 2px; }
.sh { width: 101px; height: 20px; background: #727272; border-bottom: 1px solid #333; text-align: center; font-size: 12px; line-height: 18px; letter-spacing: -.3px; }
.sh:first-child { width: 99px; }
.sh + .sh { border-left: 1px solid #333; }
.tah { font: 11px/18px "Noto Sans", sans-serif; letter-spacing: -.08px; }
.srow { height: 27px; padding: 4px 0 0 1px; display: flex; align-items: center; }
.srow .lbl { width: 195px; padding-left: 6px; letter-spacing: -.32px; }
.srow .lbl { letter-spacing: -.08px; }
.srow svg { width: 17px; height: 17px; margin-left: 13px; }
.srow svg.cp { width: 15px; height: 15px; margin-left: 6px; }
.more { width: 25px; height: 22px; margin-left: auto; padding-left: 6px; display: flex; line-height: 19px; letter-spacing: -1px; }
.srow .more svg { width: 7px; height: 4px; margin: 11px 0 0 -1px; }
.map { width: 1254px; background: #fff; border: 1px solid #555; border-bottom: 0; padding: 329px 0 0 237px; }
.field { background: #b1b1b1; border: 1px solid #333; border-radius: 4px; color: #555; display: flex; align-items: center; }
.find { height: 22px; padding-left: 8px; gap: 8px; }
.field svg { width: 13px; height: 13px; }
.algs { height: 818px; padding: 2px 1px; }
.algs .r .t { margin: 0 10px 0 7px; }

/* status bar */
.status { height: 31px; display: flex; align-items: center; padding: 2px 0 0 4px; letter-spacing: -.2px; }
.field.locate { width: 200px; height: 22px; padding-left: 8px; gap: 8px; letter-spacing: 0; }
.pan { color: #9a9a9a; width: 799px; padding-left: 9px; letter-spacing: 0; }
.field.coord { width: 89px; height: 22px; color: #111; padding-left: 6px; letter-spacing: -.1px; }
.w-coord { width: 66px; letter-spacing: -.35px; }
.bug { width: 16px; height: 16px; margin: 0 14px 0 4px; }
.w-skala { width: 28px; }
.status .combo { height: 22px; padding-left: 7px; }
.scale { width: 98px; }
.lock { width: 12px; height: 15px; margin: 0 9px 3px 12px; }
.w-pow { width: 67px; letter-spacing: -.35px; }
.status .spin { width: 84px; padding-left: 5px; justify-content: space-between; }
.spin > svg { width: 6px; height: 11px; margin-right: 5px; }
.w-kat { width: 69px; padding-left: 8px; letter-spacing: -.3px; }
.s2 { margin-right: 7px; }
.w-ren { width: 66px; padding-left: 6px; }
.globe { width: 13px; height: 13px; margin: 0 3px 0 -1px; }
.bub { width: 16px; height: 15px; margin: 0 8px 0 auto; }
```
